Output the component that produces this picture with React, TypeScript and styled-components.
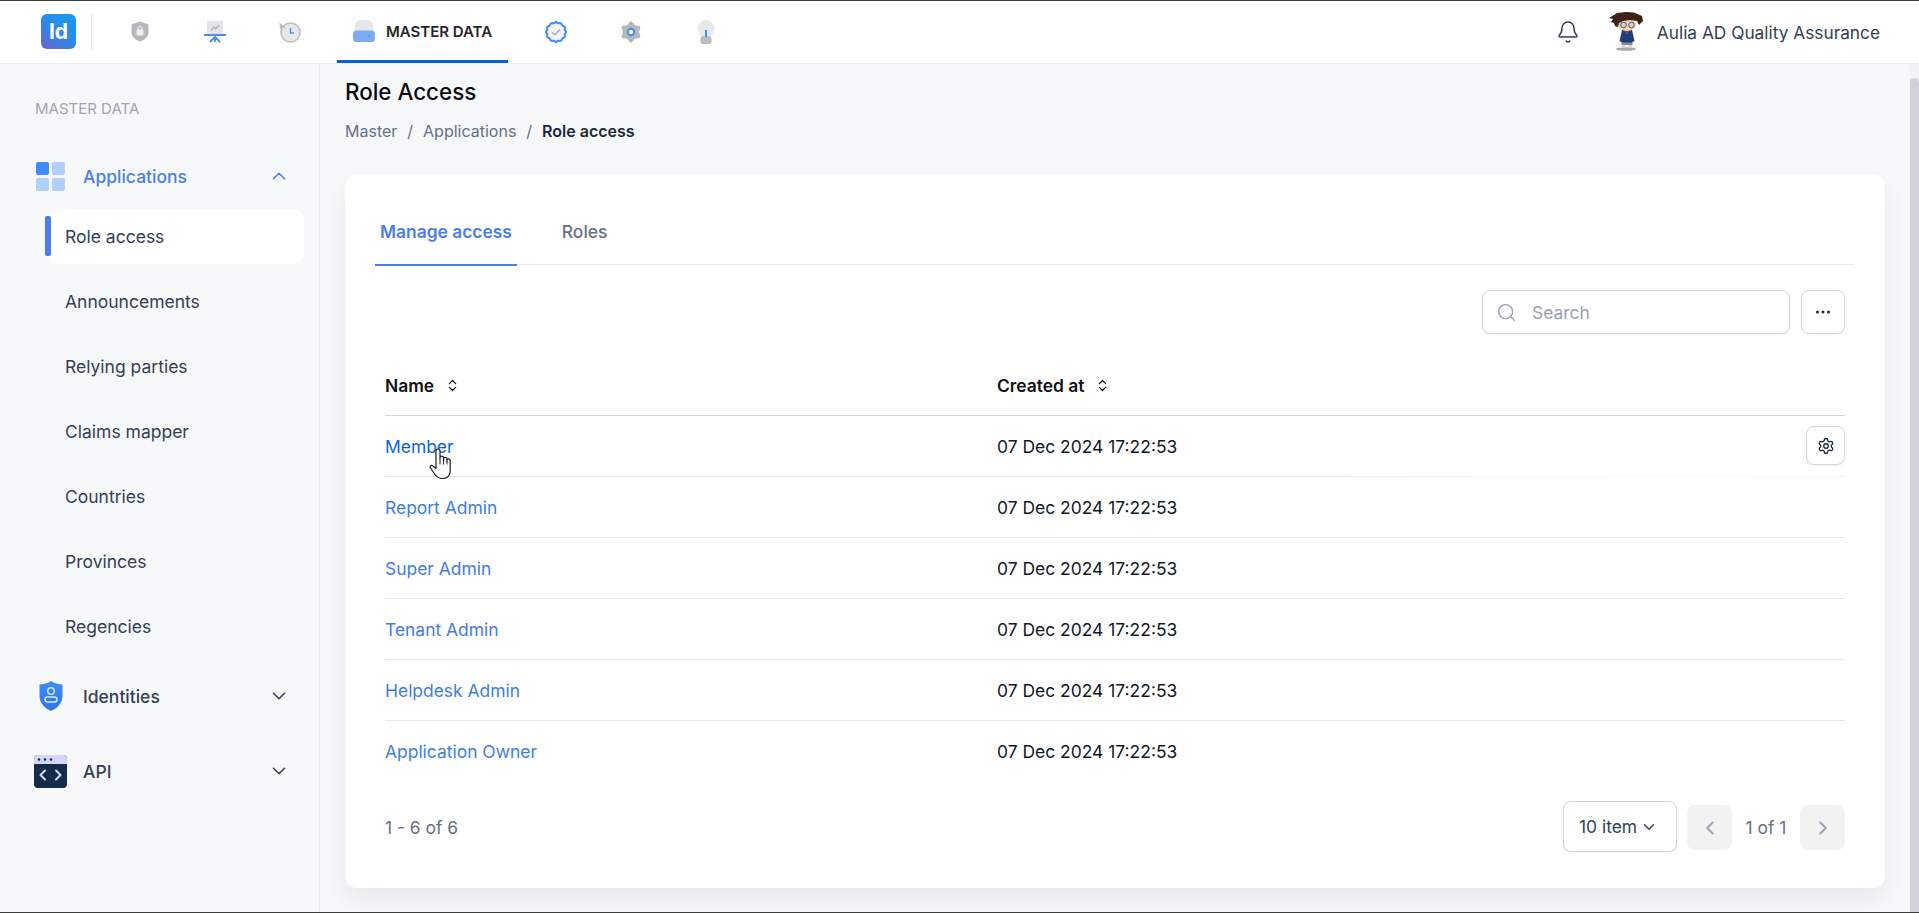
import React from 'react';
import styled, { createGlobalStyle } from 'styled-components';
import { Bell, ChevronDown, ChevronLeft, ChevronRight, ChevronUp, ChevronsUpDown, Search, Settings } from 'lucide-react';

const GlobalStyle = createGlobalStyle`
  html, body {
    margin: 0;
    height: 100%;
    overflow: hidden;
  }
  body {
    font-family: Inter, "Noto Sans", sans-serif;
    color: #101828;
  }
  * {
    box-sizing: border-box;
  }
`;

const lobes = (count: number, outer: number, inner: number, cx: number, cy: number) => {
  let d = '';
  for (let i = 0; i < count * 2; i += 1) {
    const r = i % 2 === 0 ? outer : inner;
    const a = (Math.PI * i) / count - Math.PI / 2;
    d += `${i === 0 ? 'M' : 'L'}${(cx + r * Math.cos(a)).toFixed(2)} ${(cy + r * Math.sin(a)).toFixed(2)}`;
  }
  return `${d}Z`;
};

const ShieldLockIcon = () => (
  <svg width="18" height="21" viewBox="0 0 18 21">
    <path d="M9 .5 17.5 3.5V11c0 4.500-3.500 7.800-8.500 9.500C4 18.800.5 15.500.5 11V3.500Z" fill="#b6b7bb" />
    <rect x="5.500" y="8.500" width="7" height="6" rx="1.200" fill="#f1f1f2" />
    <path d="M7 9V7.500a2 2 0 0 1 4 0V9" fill="none" stroke="#f1f1f2" strokeWidth="1.200" />
  </svg>
);

const BoardIcon = () => (
  <svg width="22" height="22" viewBox="0 0 22 22">
    <rect x="3" y="0" width="16" height="13" fill="#e4e5e7" />
    <path d="M7 9.500 10 6l1.500 2L15 4" fill="none" stroke="#b0b1b6" strokeWidth="1.300" />
    <rect x="0" y="13" width="22" height="2" fill="#4c8dfb" />
    <path d="M11 14v4M11 16l-5 5M11 16l5 5M11 16v5" fill="none" stroke="#4c8dfb" strokeWidth="1.800" />
  </svg>
);

const HistoryIcon = () => (
  <svg width="22" height="22" viewBox="0 0 22 22">
    <circle cx="11.500" cy="11.500" r="9.500" fill="#e7e8ea" stroke="#bcbdc1" strokeWidth="1.600" />
    <path d="M.5 1.500 1 7.500l6-.5Z" fill="#bcbdc1" />
    <path d="M11.500 7v5h3.500" fill="none" stroke="#4c8dfb" strokeWidth="1.400" />
  </svg>
);

const DriveIcon = () => (
  <svg width="22" height="22" viewBox="0 0 22 22">
    <path d="M1 12 2 5C2.500 2 5 0 8 0h6c3 0 5.500 2 6 5l1 7Z" fill="#e6e7e9" />
    <rect x="0" y="10.500" width="22" height="11.500" rx="3.500" fill="#7eaaf4" />
    <circle cx="16" cy="16" r=".8" fill="#4d86e8" />
  </svg>
);

const VerifiedIcon = () => (
  <svg width="22" height="22" viewBox="0 0 22 22">
    <path d={lobes(12, 10.200, 9, 11, 11)} fill="#f4f4f6" stroke="#3d8bff" strokeWidth="2" strokeLinejoin="round" />
    <path d="M7 11.500 10 14l5-5.500" fill="none" stroke="#b0b1b6" strokeWidth="1.600" />
  </svg>
);

const CogIcon = () => (
  <svg width="22" height="22" viewBox="0 0 22 22">
    <path d={lobes(6, 11.800, 8.500, 11, 11)} fill="#b6b7bb" stroke="#b6b7bb" strokeWidth="3" strokeLinejoin="round" transform="translate(2.200 2.200) scale(.8)" />
    <circle cx="11" cy="11" r="3.200" fill="#fff" stroke="#3d8bff" strokeWidth="2" />
  </svg>
);

const BulbIcon = () => (
  <svg width="18" height="24" viewBox="0 0 18 24">
    <path d="M9 0a8.500 8.500 0 0 1 8.500 8.500c0 3.500-2 5.500-3.500 7.500H4C2.500 14 .5 12 .5 8.500A8.500 8.500 0 0 1 9 0Z" fill="#e8e9eb" />
    <rect x="3.500" y="16" width="11" height="8" rx="2.500" fill="#bcbdc1" />
    <rect x="8" y="10" width="2" height="7" fill="#3d8bff" />
  </svg>
);

const AppsIcon = () => (
  <svg width="29" height="29" viewBox="0 0 29 29">
    <rect x="0" y="0" width="13" height="13" rx="2" fill="#3d8bff" />
    <rect x="16" y="0" width="13" height="13" rx="2" fill="#b2d0ff" />
    <rect x="0" y="16" width="13" height="13" rx="2" fill="#b2d0ff" />
    <rect x="16" y="16" width="13" height="13" rx="2" fill="#b2d0ff" />
  </svg>
);

const IdentityIcon = () => (
  <svg width="24" height="30" viewBox="0 0 24 30">
    <defs>
      <linearGradient id="identityFill" x1="0" y1="0" x2="0" y2="1">
        <stop offset="0" stopColor="#3d8bff" />
        <stop offset="1" stopColor="#2f76e6" />
      </linearGradient>
    </defs>
    <path d="M12 0c2.500 2 6 3 11.500 3.500V15c0 7-5 12-11.500 15C5.500 27 .5 22 .5 15V3.500C6 3 9.500 2 12 0Z" fill="url(#identityFill)" />
    <circle cx="12" cy="10" r="3.300" fill="none" stroke="#dbe8ff" strokeWidth="1.400" />
    <rect x="6" y="16" width="12" height="5" rx="2.500" fill="none" stroke="#dbe8ff" strokeWidth="1.400" />
  </svg>
);

const ApiIcon = () => (
  <svg width="33" height="33" viewBox="0 0 33 33">
    <rect width="33" height="33" rx="4" fill="#142c4a" />
    <path d="M0 9V4a4 4 0 0 1 4-4h25a4 4 0 0 1 4 4v5Z" fill="#d5d6fb" />
    <circle cx="5" cy="4.500" r="1.300" fill="#142c4a" />
    <circle cx="11" cy="4.500" r="1.300" fill="#142c4a" />
    <circle cx="17" cy="4.500" r="1.300" fill="#142c4a" />
    <path d="M11 15.500 6.500 20l4.500 4.500M22 15.500l4.500 4.500-4.500 4.500" fill="none" stroke="#d5d6fb" strokeWidth="2" strokeLinecap="round" strokeLinejoin="round" />
  </svg>
);

const DotsIcon = () => (
  <svg width="14" height="4" viewBox="0 0 14 4">
    <circle cx="1.500" cy="2" r="1.500" fill="#1d2939" />
    <circle cx="7" cy="2" r="1.500" fill="#1d2939" />
    <circle cx="12.500" cy="2" r="1.500" fill="#1d2939" />
  </svg>
);

const HandIcon = () => (
  <svg width="22" height="31" viewBox="-.5 -.5 22 31">
    <path
      d="M6.500 17V2.500a2 2 0 0 1 4 0V11V9.500a1.800 1.800 0 0 1 3.600 0V12V10.500a1.700 1.700 0 0 1 3.400 0V13V12a1.600 1.600 0 0 1 3.200 0V22c0 5-3 8-8 8-4 0-6-2-8-5L1 19.500C-.2 18 1.600 16.200 3 17.300L6.500 20Z"
      fill="#fff"
      stroke="#1d1d1f"
      strokeWidth="1.200"
      strokeLinejoin="round"
    />
    <path d="M10.500 11v5M14.100 12v4M17.500 13v3" fill="none" stroke="#1d1d1f" strokeWidth="1" />
  </svg>
);

const ConanAvatar = () => (
  <svg width="34" height="40" viewBox="0 0 34 40">
    <ellipse cx="17" cy="37" rx="10" ry="1.800" fill="#a9aaa6" />
    <rect x="13" y="31" width="3.500" height="5" fill="#d9d2c4" />
    <rect x="19" y="31" width="3.500" height="5" fill="#d9d2c4" />
    <rect x="12.500" y="27" width="11" height="6" fill="#7e8c9c" />
    <path d="M13 18h10l2.500 11-3 1.500H13.500l-3-1.500Z" fill="#1c3f7c" />
    <path d="M16 18h4l-2 4Z" fill="#f4f1ea" />
    <rect x="16.500" y="19" width="3" height="2" fill="#b3282d" />
    <ellipse cx="18" cy="13" rx="9" ry="6" fill="#f3cfb0" />
    <path d="M0 6 5 3 8 1 17 0 25 .5 33 4 34 9 30 13 28 9 21 8 14 9 10 11 9 15 6 14 5 11 2 10 4 7Z" fill="#3c2415" />
    <circle cx="14.500" cy="13" r="2.800" fill="#bcd7ea" stroke="#4a3a35" strokeWidth=".8" />
    <circle cx="22.500" cy="13" r="2.800" fill="#bcd7ea" stroke="#4a3a35" strokeWidth=".8" />
  </svg>
);

type NavEntry = { key: string; icon: React.ReactNode };

const leftNav: NavEntry[] = [
  { key: 'security', icon: <ShieldLockIcon /> },
  { key: 'board', icon: <BoardIcon /> },
  { key: 'history', icon: <HistoryIcon /> },
];

const rightNav: NavEntry[] = [
  { key: 'verified', icon: <VerifiedIcon /> },
  { key: 'settings', icon: <CogIcon /> },
  { key: 'tips', icon: <BulbIcon /> },
];

const subMenu = ['Role access', 'Announcements', 'Relying parties', 'Claims mapper', 'Countries', 'Provinces', 'Regencies'];
const roles = ['Member', 'Report Admin', 'Super Admin', 'Tenant Admin', 'Helpdesk Admin', 'Application Owner'];

const App = () => {
  return (
    <Page>
      <GlobalStyle />
      <Header>
        <Logo>Id</Logo>
        <LogoDivider />
        <NavGroup>
          {leftNav.map((item) => (
            <NavIcon key={item.key}>{item.icon}</NavIcon>
          ))}
        </NavGroup>
        <ActiveTab>
          <DriveIcon />
          MASTER DATA
        </ActiveTab>
        <NavGroup>
          {rightNav.map((item) => (
            <NavIcon key={item.key}>{item.icon}</NavIcon>
          ))}
        </NavGroup>
        <UserArea>
          <Bell size={24} strokeWidth={1.5} color="#344054" />
          <UserInfo>
            <ConanAvatar />
            <UserName>Aulia AD Quality Assurance</UserName>
          </UserInfo>
        </UserArea>
      </Header>
      <Body>
        <Sidebar>
          <SidebarLabel>MASTER DATA</SidebarLabel>
          <GroupHeader $active>
            <GroupIcon>
              <AppsIcon />
            </GroupIcon>
            <GroupTitle>Applications</GroupTitle>
            <ChevronUp size={22} strokeWidth={1.7} />
          </GroupHeader>
          <SubMenu>
            {subMenu.map((label, index) => (
              <SubMenuItem key={label} $active={index === 0}>
                {label}
              </SubMenuItem>
            ))}
          </SubMenu>
          <GroupHeader>
            <GroupIcon>
              <IdentityIcon />
            </GroupIcon>
            <GroupTitle>Identities</GroupTitle>
            <ChevronDown size={22} strokeWidth={1.7} />
          </GroupHeader>
          <GroupHeader>
            <GroupIcon>
              <ApiIcon />
            </GroupIcon>
            <GroupTitle>API</GroupTitle>
            <ChevronDown size={22} strokeWidth={1.7} />
          </GroupHeader>
        </Sidebar>
        <Main>
          <PageTitle>Role Access</PageTitle>
          <Breadcrumb>
            <span>Master</span>
            <Slash>/</Slash>
            <span>Applications</span>
            <Slash>/</Slash>
            <Current>Role access</Current>
          </Breadcrumb>
          <Card>
            <Tabs>
              <Tab $active>Manage access</Tab>
              <Tab>Roles</Tab>
            </Tabs>
            <Toolbar>
              <SearchBox>
                <Search size={21} strokeWidth={1.6} color="#98a2b3" />
                <SearchInput placeholder="Search" />
              </SearchBox>
              <SquareButton>
                <DotsIcon />
              </SquareButton>
            </Toolbar>
            <Table>
              <HeadRow>
                <HeadCell>
                  Name
                  <ChevronsUpDown size={15} strokeWidth={2} />
                </HeadCell>
                <HeadCell>
                  Created at
                  <ChevronsUpDown size={15} strokeWidth={2} />
                </HeadCell>
              </HeadRow>
              {roles.map((role, index) => (
                <Row key={role} $hovered={index === 0} $last={index === roles.length - 1}>
                  <RoleLink $hovered={index === 0}>
                    {role}
                    {index === 0 && (
                      <HandCursor>
                        <HandIcon />
                      </HandCursor>
                    )}
                  </RoleLink>
                  <span>07 Dec 2024 17:22:53</span>
                  {index === 0 && (
                    <RowAction>
                      <Settings size={18} strokeWidth={1.8} color="#1d2939" />
                    </RowAction>
                  )}
                </Row>
              ))}
            </Table>
            <Footer>
              <RangeText>1 - 6 of 6</RangeText>
              <Pager>
                <PageSize>
                  10 item
                  <ChevronDown size={18} strokeWidth={2} />
                </PageSize>
                <PageButton>
                  <ChevronLeft size={22} strokeWidth={2} />
                </PageButton>
                <PageCount>1 of 1</PageCount>
                <PageButton>
                  <ChevronRight size={22} strokeWidth={2} />
                </PageButton>
              </Pager>
            </Footer>
          </Card>
        </Main>
        <ScrollTrack>
          <ScrollThumb />
        </ScrollTrack>
      </Body>
    </Page>
  );
};

export default App;

const Page = styled.div`
  width: 1919px;
  height: 913px;
  display: flex;
  flex-direction: column;
  overflow: hidden;
  border-top: 1px solid #3c3c3c;
  border-bottom: 1px solid #3c3c3c;
  background-color: #f7f8fa;
`;

const Header = styled.header`
  height: 63px;
  flex-shrink: 0;
  display: flex;
  align-items: center;
  padding-left: 41px;
  background-color: #fff;
  border-bottom: 1px solid #eceef1;
`;

const Logo = styled.div`
  width: 35px;
  height: 35px;
  margin-top: -1px;
  border-radius: 6px;
  display: flex;
  align-items: center;
  justify-content: center;
  font-size: 21px;
  font-weight: 700;
  color: #fff;
  background: linear-gradient(35deg, #6e62cf 0%, #2b8ae8 50%, #169bf0 100%);
`;

const LogoDivider = styled.div`
  width: 1px;
  height: 36px;
  margin: 0 10px 0 15px;
  background-color: #e4e5e8;
`;

const NavGroup = styled.nav`
  display: flex;
`;

const NavIcon = styled.div`
  width: 75px;
  height: 62px;
  display: flex;
  align-items: center;
  justify-content: center;
  padding-bottom: 1px;
`;

const ActiveTab = styled.div`
  width: 171px;
  height: 62px;
  margin: 0 10px;
  display: flex;
  align-items: center;
  justify-content: center;
  gap: 11px;
  font-size: 15px;
  font-weight: 600;
  color: #26262b;
  border-bottom: 3px solid #0a5fdb;
  padding-top: 1px;
`;

const UserArea = styled.div`
  margin-left: auto;
  padding-right: 39px;
  display: flex;
  align-items: center;
  gap: 29px;
`;

const UserInfo = styled.div`
  display: flex;
  align-items: center;
  gap: 14px;
`;

const UserName = styled.span`
  font-size: 17.300px;
  color: #344054;
`;

const Body = styled.div`
  flex: 1;
  min-height: 0;
  display: flex;
`;

const Sidebar = styled.aside`
  width: 320px;
  flex-shrink: 0;
  padding: 34px 15px 0 0;
  border-right: 1px solid #e4e6ea;
`;

const SidebarLabel = styled.div`
  padding-left: 35px;
  margin-bottom: 28px;
  font-size: 15px;
  line-height: 22px;
  color: #a1a5b3;
`;

const GroupHeader = styled.div<{ $active?: boolean }>`
  height: 56px;
  padding-right: 14px;
  display: flex;
  align-items: center;
  color: ${({ $active }) => ($active ? '#4a7fe8' : '#344054')};
  margin-bottom: ${({ $active }) => ($active ? '5px' : '19px')};
`;

const GroupIcon = styled.div`
  width: 83px;
  padding: 0 16px 0 34px;
  display: flex;
  align-items: center;
  justify-content: center;
`;

const GroupTitle = styled.span`
  flex: 1;
  font-size: 17.500px;
  font-weight: 500;
`;

const SubMenu = styled.div`
  margin: 0 0 14px 48px;
  display: flex;
  flex-direction: column;
  gap: 10px;
`;

const SubMenuItem = styled.div<{ $active?: boolean }>`
  position: relative;
  height: 55px;
  padding-left: 17px;
  display: flex;
  align-items: center;
  font-size: 17.500px;
  font-weight: 400;
  color: #344054;
  border-radius: 10px;
  background-color: ${({ $active }) => ($active ? '#fff' : 'transparent')};

  &::before {
    content: '';
    display: ${({ $active }) => ($active ? 'block' : 'none')};
    position: absolute;
    left: -3px;
    top: 7px;
    width: 6px;
    height: 40px;
    border-radius: 2px;
    background-color: #4a7fe8;
  }
`;

const Main = styled.main`
  flex: 1;
  min-width: 0;
  padding: 12px 25px 0;
`;

const PageTitle = styled.h1`
  margin: 0;
  font-size: 22.400px;
  line-height: 32px;
  font-weight: 500;
  color: #0b0b0f;
`;

const Breadcrumb = styled.div`
  margin-top: 12px;
  display: flex;
  align-items: center;
  font-size: 16px;
  line-height: 22px;
  color: #667085;
`;

const Slash = styled.span`
  margin: 0 10px;
`;

const Current = styled.span`
  font-weight: 600;
  color: #1d2939;
`;

const Card = styled.section`
  margin-top: 32px;
  height: 714px;
  padding: 30px 31px 0 30px;
  border-radius: 12px;
  background-color: #fff;
  box-shadow: 0 12px 24px rgba(16, 24, 40, 0.07);
`;

const Tabs = styled.div`
  display: flex;
  gap: 40px;
  border-bottom: 1px solid #e4e7ec;
  height: 61px;
`;

const Tab = styled.div<{ $active?: boolean }>`
  height: 62px;
  padding: 16px 5px 0 5px;
  font-size: 17.400px;
  line-height: 24px;
  font-weight: ${({ $active }) => ($active ? 600 : 500)};
  color: ${({ $active }) => ($active ? '#4a7fe8' : '#667085')};
  border-bottom: ${({ $active }) => ($active ? '2px solid #4a7fe8' : 'none')};
`;

const Toolbar = styled.div`
  margin-top: 25px;
  padding-right: 9px;
  display: flex;
  justify-content: flex-end;
  gap: 11px;
`;

const SearchBox = styled.label`
  width: 308px;
  height: 44px;
  padding: 0 13px;
  display: flex;
  align-items: center;
  gap: 15px;
  border: 1px solid #d0d5dd;
  border-radius: 8px;
  box-shadow: 0 1px 2px rgba(16, 24, 40, 0.05);
`;

const SearchInput = styled.input`
  flex: 1;
  min-width: 0;
  border: none;
  outline: none;
  padding: 0;
  font-family: inherit;
  font-size: 17.400px;
  color: #344054;

  &::placeholder {
    color: #98a2b3;
    opacity: 1;
  }
`;

const SquareButton = styled.button`
  width: 44px;
  height: 44px;
  padding: 0;
  display: flex;
  align-items: center;
  justify-content: center;
  background-color: #fff;
  border: 1px solid #d0d5dd;
  border-radius: 8px;
  box-shadow: 0 1px 2px rgba(16, 24, 40, 0.05);
`;

const Table = styled.div`
  margin: 21px 9px 0 10px;
`;

const HeadRow = styled.div`
  height: 61px;
  display: grid;
  grid-template-columns: 612px 1fr;
  align-items: center;
  border-bottom: 1px solid #d3d5db;
`;

const HeadCell = styled.div`
  display: flex;
  align-items: center;
  gap: 11px;
  font-size: 17.400px;
  font-weight: 600;
  color: #101018;
`;

const Row = styled.div<{ $hovered?: boolean; $last?: boolean }>`
  position: relative;
  height: 61px;
  display: grid;
  grid-template-columns: 612px 1fr;
  align-items: center;
  font-size: 17.450px;
  color: #101828;
  border-bottom: 1px solid ${({ $last }) => ($last ? 'transparent' : '#e6e8ec')};
  ${({ $hovered }) =>
    $hovered && 'border-image: linear-gradient(to right, #e6e8ec 60%, #fbfbfb 88%, #f4f4f5 100%) 1;'}
`;

const RoleLink = styled.a<{ $hovered?: boolean }>`
  position: relative;
  justify-self: start;
  color: ${({ $hovered }) => ($hovered ? '#0a66e0' : '#3f7ede')};
`;

const HandCursor = styled.span`
  position: absolute;
  left: 44px;
  top: 12px;
  display: flex;
`;

const RowAction = styled.button`
  position: absolute;
  right: 0;
  top: 10px;
  width: 39px;
  height: 39px;
  padding: 0;
  display: flex;
  align-items: center;
  justify-content: center;
  background-color: #fff;
  border: 1px solid #d0d5dd;
  border-radius: 8px;
  box-shadow: 0 1px 2px rgba(16, 24, 40, 0.05);
`;

const Footer = styled.div`
  margin: 19px 9px 0 10px;
  display: flex;
  align-items: center;
  justify-content: space-between;
`;

const RangeText = styled.span`
  margin-top: 1px;
  font-size: 17.400px;
  color: #667085;
`;

const Pager = styled.div`
  display: flex;
  align-items: center;
`;

const PageSize = styled.button`
  width: 114px;
  height: 51px;
  margin-right: 10px;
  padding: 0 0 0 15px;
  display: flex;
  align-items: center;
  gap: 3px;
  font-family: inherit;
  font-size: 17.400px;
  color: #344054;
  background-color: #fff;
  border: 1px solid #d0d5dd;
  border-radius: 8px;
  box-shadow: 0 1px 2px rgba(16, 24, 40, 0.05);
`;

const PageButton = styled.button`
  width: 45px;
  height: 45px;
  margin-top: 2px;
  padding: 0;
  display: flex;
  align-items: center;
  justify-content: center;
  color: #98a2b3;
  background-color: #f2f2f3;
  border: none;
  border-radius: 8px;
`;

const PageCount = styled.span`
  width: 68px;
  margin-top: 2px;
  text-align: center;
  font-size: 17.400px;
  color: #667085;
`;

const ScrollTrack = styled.div`
  width: 9px;
  flex-shrink: 0;
  padding-top: 14px;
  background-color: #f1f2f5;
`;

const ScrollThumb = styled.div`
  height: 100%;
  border-radius: 5px 5px 0 0;
  background-color: #cfd2da;
`;
